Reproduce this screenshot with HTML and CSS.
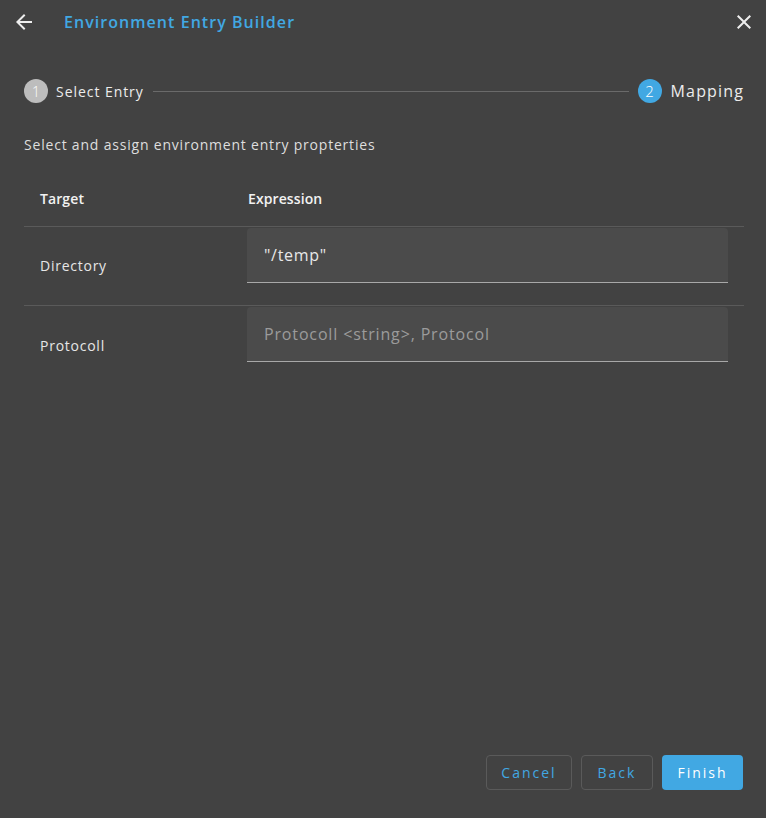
FILE: index.html
```html
<!DOCTYPE html>
<html>
<head>
<meta charset="utf-8">
<link rel="stylesheet" href="styles.css">
</head>
<body>
<div class="dialog">
  <div class="header">
    <button class="icon-btn back">
      <svg width="24" height="24" viewBox="0 0 24 24"><path fill="#eeeeee" d="M20 11H7.83l5.59-5.59L12 4l-8 8 8 8 1.41-1.41L7.830 13H20v-2z"/></svg>
    </button>
    <div class="title">Environment Entry Builder</div>
    <button class="icon-btn close">
      <svg width="24" height="24" viewBox="0 0 24 24"><path fill="#eeeeee" d="M19 6.41L17.59 5 12 10.59 6.41 5 5 6.41 10.59 12 5 17.59 6.41 19 12 13.41 17.59 19 19 17.59 13.41 12z"/></svg>
    </button>
  </div>

  <div class="stepper">
    <div class="step done">
      <span class="dot">1</span>
      <span class="step-label">Select Entry</span>
    </div>
    <div class="step-line"></div>
    <div class="step active">
      <span class="dot">2</span>
      <span class="step-label">Mapping</span>
    </div>
  </div>

  <p class="desc">Select and assign environment entry propterties</p>

  <div class="table">
    <div class="row head">
      <div class="cell c1">Target</div>
      <div class="cell c2">Expression</div>
    </div>
    <div class="row">
      <div class="cell c1">Directory</div>
      <div class="cell c2"><div class="field"><span class="value">"/temp"</span></div></div>
    </div>
    <div class="row">
      <div class="cell c1">Protocoll</div>
      <div class="cell c2"><div class="field"><span class="placeholder">Protocoll &lt;string&gt;, Protocol</span></div></div>
    </div>
  </div>

  <div class="spacer"></div>

  <div class="actions">
    <button class="btn outline cancel">Cancel</button>
    <button class="btn outline backbtn">Back</button>
    <button class="btn primary finish">Finish</button>
  </div>
</div>
</body>
</html>
```

FILE: styles.css
```css
* { box-sizing: border-box; }
html, body {
  margin: 0;
  padding: 0;
  background: #424242;
}
body {
  font-family: "Open Sans", "Noto Sans", sans-serif;
  color: #e6e6e6;
}
.dialog {
  width: 766px;
  height: 818px;
  background: #424242;
  display: flex;
  flex-direction: column;
}
.header {
  height: 44px;
  display: flex;
  align-items: center;
}
.icon-btn {
  background: none;
  border: 0;
  padding: 0;
  width: 24px;
  height: 24px;
  display: flex;
  cursor: pointer;
}
.icon-btn.back { margin-left: 12px; }
.icon-btn.close { margin-left: auto; margin-right: 10px; }
.title {
  margin-left: 28px;
  font-size: 16px;
  font-weight: 600;
  color: #41a8e3;
  letter-spacing: 1.05px;
}
.stepper {
  margin-top: 35px;
  padding: 0 22px 0 24px;
  display: flex;
  align-items: center;
  height: 24px;
}
.step {
  display: flex;
  align-items: center;
}
.dot {
  width: 24px;
  height: 24px;
  border-radius: 50%;
  display: flex;
  align-items: center;
  justify-content: center;
  font-size: 14px;
  color: #fff;
  font-weight: 300;
}
.done .dot { background: #bdbdbd; }
.active .dot { background: #41a8e3; font-size: 15px; }
.step-label {
  margin-left: 8px;
  font-size: 14px;
  letter-spacing: 0.95px;
  color: #ececec;
}
.active .step-label { font-size: 16px; margin-left: 9px; letter-spacing: 1.15px; }
.step-line {
  flex: 1;
  height: 1px;
  background: #6a6a6a;
  margin: 0 9px;
}
.desc {
  margin: 32px 0 0 24px;
  font-size: 14px;
  line-height: 20px;
  color: #dedede;
  letter-spacing: 0.8px;
}
.table {
  margin: 18px 22px 0 24px;
}
.row {
  display: flex;
  border-bottom: 1px solid #5a5a5a;
  height: 79px;
}
.row.head {
  height: 54px;
  align-items: center;
  font-weight: 600;
  font-size: 14px;
  color: #f2f2f2;
}
.row:last-child { border-bottom: 0; }
.cell.c1 {
  width: 208px;
  padding-left: 16px;
  font-size: 14px;
  letter-spacing: 0.75px;
  align-self: center;
}
.head .cell.c1, .head .cell.c2 { letter-spacing: 0.1px; }
.head .cell { margin-top: -2px; }
.cell.c2 {
  flex: 1;
  padding-left: 16px;
  padding-right: 17px;
}
.row:not(.head) .cell.c1 { margin-top: -1px; }
.row:not(.head) .cell.c2 {
  padding-left: 15px;
  padding-right: 16px;
  padding-top: 1px;
}
.field {
  height: 55px;
  background: #4b4b4b;
  border-bottom: 1px solid #a8a8a8;
  border-radius: 4px 4px 0 0;
  display: flex;
  align-items: center;
  padding-left: 17px;
  font-size: 16px;
  letter-spacing: 0.7px;
}
.value { color: #e8e8e8; }
.placeholder { color: #9b9b9b; letter-spacing: 0.85px; }
.spacer { flex: 1; }
.actions {
  display: flex;
  justify-content: flex-end;
  gap: 9px;
  padding: 0 23px 28px 0;
}
.btn {
  height: 35px;
  border-radius: 4px;
  font-family: inherit;
  font-size: 14px;
  font-weight: 500;
  letter-spacing: 2px;
  cursor: pointer;
}
.btn.outline {
  background: transparent;
  border: 1px solid #5a5a5a;
  color: #41a8e3;
}
.btn.primary {
  background: #41a8e3;
  border: 0;
  color: #fff;
}
.cancel { width: 86px; }
.backbtn { width: 72px; }
.finish { width: 81px; }
```
